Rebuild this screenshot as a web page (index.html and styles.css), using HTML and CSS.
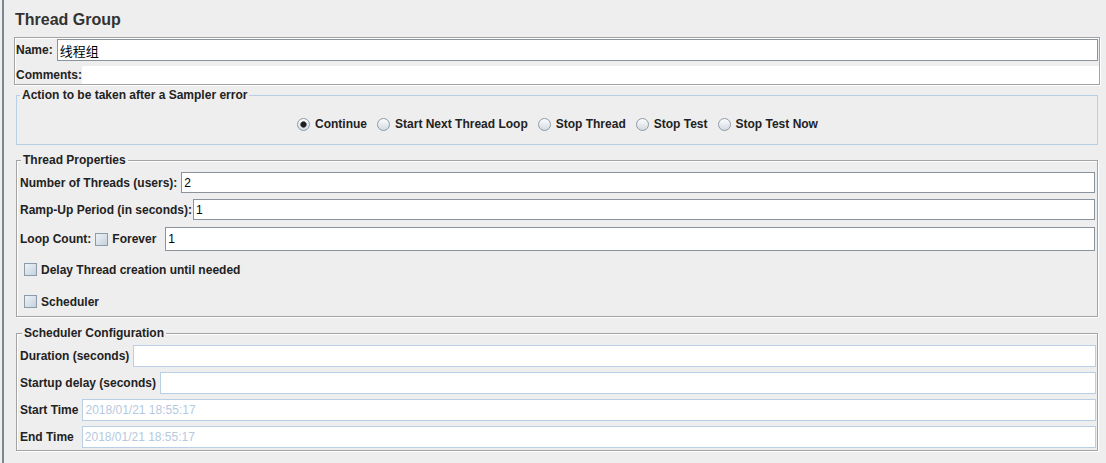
FILE: index.html
```html
<!DOCTYPE html>
<html lang="zh-CN">
<head>
    <meta charset="UTF-8">
    <title>Thread Group</title>
    <link rel="stylesheet" href="styles.css">
</head>
<body>
    <div class="panel">
        <h1 class="title">Thread Group</h1>

        <!-- 名称 / 注释 -->
        <div class="name-box">
            <div class="row name-row">
                <label>Name:</label>
                <input type="text" class="field field-name" value="线程组">
            </div>
            <div class="row comments-row">
                <label>Comments:</label>
                <div class="comments-area"></div>
            </div>
        </div>

        <!-- 取样器错误后的动作 -->
        <fieldset class="group action">
            <legend>Action to be taken after a Sampler error</legend>
            <div class="radio-row">
                <label class="radio"><input type="radio" name="onerror" class="radio-box" checked>Continue</label>
                <label class="radio"><input type="radio" name="onerror" class="radio-box">Start Next Thread Loop</label>
                <label class="radio"><input type="radio" name="onerror" class="radio-box">Stop Thread</label>
                <label class="radio"><input type="radio" name="onerror" class="radio-box">Stop Test</label>
                <label class="radio"><input type="radio" name="onerror" class="radio-box">Stop Test Now</label>
            </div>
        </fieldset>

        <!-- 线程属性 -->
        <fieldset class="group props">
            <legend>Thread Properties</legend>
            <div class="row prop-row threads-row">
                <label>Number of Threads (users):</label>
                <input type="text" class="field" value="2">
            </div>
            <div class="row prop-row ramp-row">
                <label>Ramp-Up Period (in seconds):</label>
                <input type="text" class="field" value="1">
            </div>
            <div class="row prop-row loop-row">
                <label>Loop Count:</label>
                <label class="check-inline"><input type="checkbox" class="check">Forever</label>
                <input type="text" class="field loop-field" value="1">
            </div>
            <label class="row check-row delay-row"><input type="checkbox" class="check">Delay Thread creation until needed</label>
            <label class="row check-row sched-row"><input type="checkbox" class="check">Scheduler</label>
        </fieldset>

        <!-- 调度器配置 -->
        <fieldset class="group sched">
            <legend>Scheduler Configuration</legend>
            <div class="row sched-line">
                <label>Duration (seconds)</label>
                <input type="text" class="field field-off">
            </div>
            <div class="row sched-line">
                <label>Startup delay (seconds)</label>
                <input type="text" class="field field-off">
            </div>
            <div class="row sched-line">
                <label>Start Time</label>
                <input type="text" class="field field-off" value="2018/01/21 18:55:17">
            </div>
            <div class="row sched-line end-line">
                <label>End Time</label>
                <input type="text" class="field field-off" value="2018/01/21 18:55:17">
            </div>
        </fieldset>
    </div>
</body>
</html>
```

FILE: styles.css
```css
* {
    box-sizing: border-box;
}

body {
    margin: 0;
    background: #eeeeee;
    font-family: "Liberation Sans", Arial, sans-serif;
    font-size: 12px;
    color: #222;
}

.panel {
    margin-left: 2px;
    border-left: 2px solid #7d8791;
    min-height: 100vh;
    padding-top: 10px;
    overflow: hidden;
}

.title {
    margin: 0 0 7px 11px;
    font-size: 16px;
    line-height: 20px;
    font-weight: bold;
    color: #333;
}

label {
    font-weight: bold;
    white-space: nowrap;
}

.row {
    display: flex;
    align-items: center;
}

/* 输入框 */
.field {
    flex: 1;
    min-width: 0;
    height: 21px;
    margin: 0;
    padding: 0 2px;
    border: 1px solid #8b949c;
    background: #fff;
    color: #000;
    font: 12px "Liberation Sans", Arial, sans-serif;
    outline: none;
}

.field-off {
    height: 22px;
    border-color: #b8cfe5;
    color: #b5c9de;
}

/* 名称框 */
.name-box {
    margin: 0 6px 0 10px;
    height: 48px;
    padding: 1px 0 0 1px;
    border: 1px solid #a3a3a3;
    box-shadow: inset 1px 1px 0 #fff, 1px 1px 0 #fff;
}

.name-row {
    height: 22px;
    gap: 4px;
    padding-right: 1px;
}

.field-name {
    height: 22px;
    font-family: "Liberation Sans", "Noto Sans CJK SC", sans-serif;
    font-size: 13px;
}

.comments-row {
    height: 18px;
    margin-top: 5px;
}

.comments-area {
    flex: 1;
    height: 18px;
    background: #fff;
}

/* 分组框 */
.group {
    margin: 0 8px 0 12px;
    padding: 4px 2px 4px 3px;
    min-width: 0;
    border: 1px solid #a3a3a3;
    box-shadow: inset 1px 1px 0 #fff, 1px 1px 0 #fff;
}

.group legend {
    padding: 0 2px;
    font-weight: bold;
    line-height: 15px;
    background: #eeeeee;
}

.action {
    margin-top: 3px;
    padding: 13px 2px 12px 3px;
    border-color: #b8cfe5;
    box-shadow: none;
}

.radio-row {
    display: flex;
    justify-content: center;
    gap: 10px;
    height: 16px;
}

.radio {
    display: flex;
    align-items: center;
    gap: 5px;
}

.radio-box {
    appearance: none;
    width: 13px;
    height: 13px;
    margin: 0;
    border: 1px solid #8f9ba7;
    border-radius: 50%;
    background: linear-gradient(#fbfcfd, #d3dae2);
}

.radio-box:checked {
    background:
        radial-gradient(circle, #1e1e1e 0 2.4px, #6b7178 3px, transparent 3.6px),
        linear-gradient(#fbfcfd, #d3dae2);
}

.check {
    appearance: none;
    width: 13px;
    height: 13px;
    margin: 0;
    border: 1px solid #8d9aa8;
    background: linear-gradient(135deg, #edf2f7, #c5d1dd);
}

/* 线程属性 */
.props {
    margin-top: 8px;
}

.props legend {
    margin-left: 1px;
}

.prop-row {
    gap: 4px;
}

.ramp-row {
    margin-top: 6px;
    gap: 1px;
}

.loop-row {
    margin-top: 7px;
    gap: 4px;
}

.loop-field {
    height: 24px;
    margin-left: 5px;
}

.check-inline {
    display: flex;
    align-items: center;
    gap: 4px;
}

.check-row {
    height: 21px;
    gap: 4px;
    padding-left: 4px;
}

.delay-row {
    margin-top: 8px;
}

.sched-row {
    margin-top: 11px;
}

/* 调度器配置 */
.sched {
    margin-top: 9px;
    padding: 4px 1px 2px 3px;
}

.sched legend {
    margin-left: 2px;
}

.sched-line {
    gap: 4px;
}

.sched-line + .sched-line {
    margin-top: 5px;
}

.end-line {
    gap: 8px;
}
```
